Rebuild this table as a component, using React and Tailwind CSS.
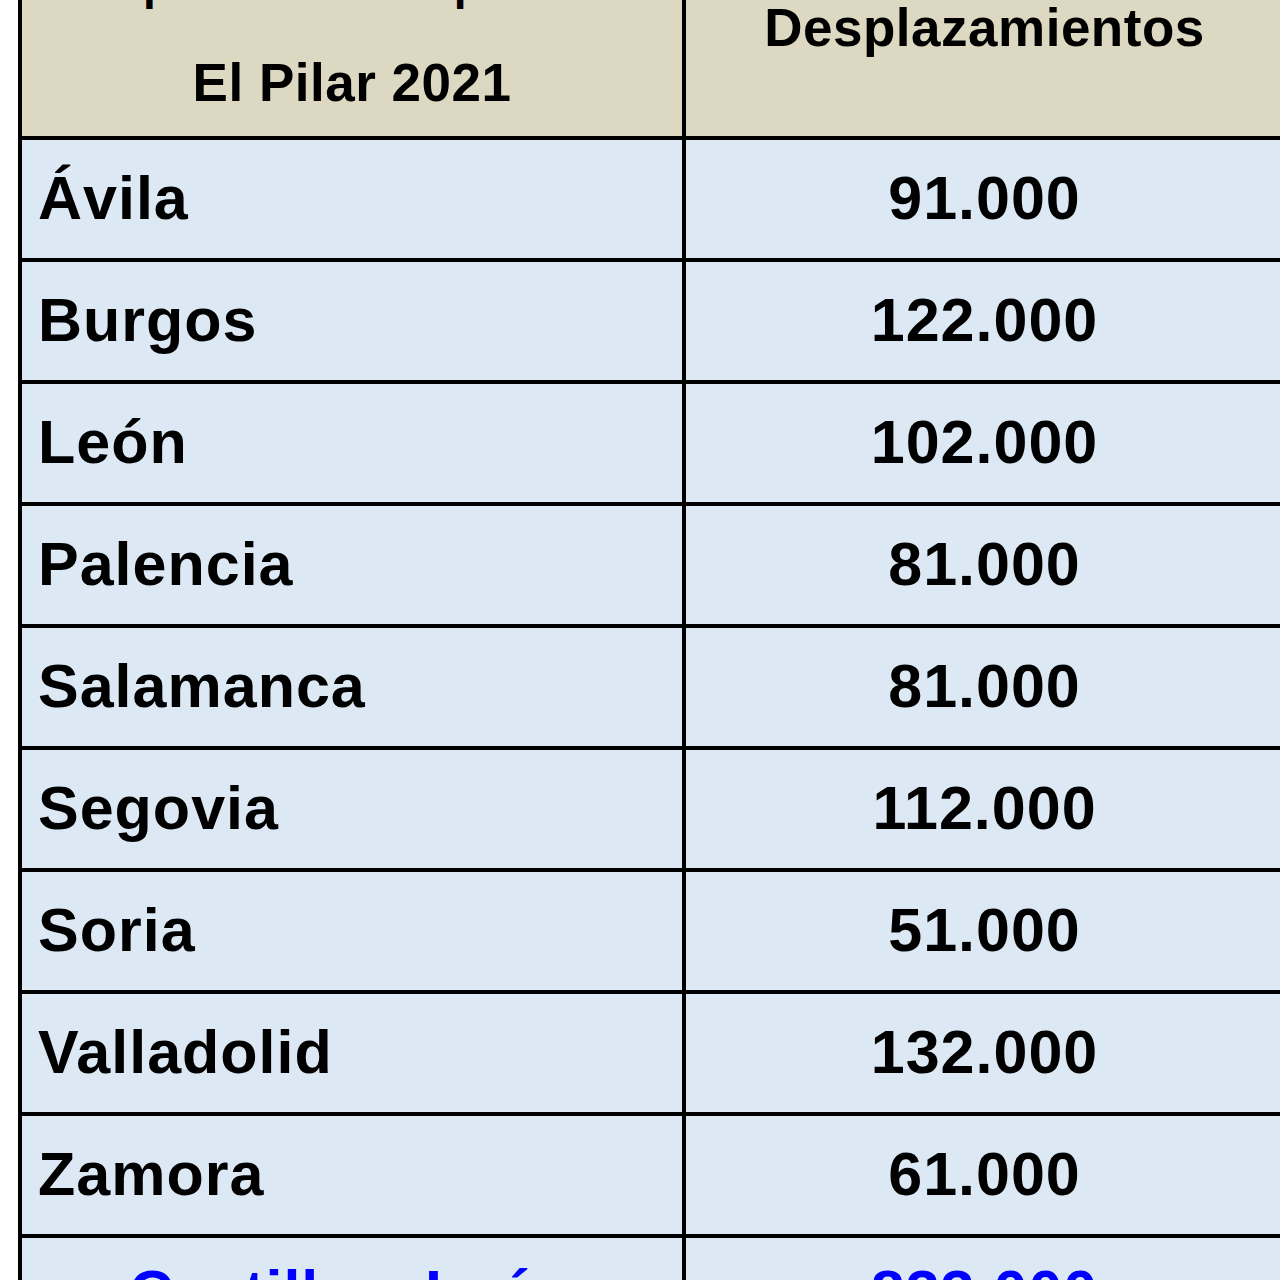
import React from "react";

const rows = [
  ["Ávila", "91.000"],
  ["Burgos", "122.000"],
  ["León", "102.000"],
  ["Palencia", "81.000"],
  ["Salamanca", "81.000"],
  ["Segovia", "112.000"],
  ["Soria", "51.000"],
  ["Valladolid", "132.000"],
  ["Zamora", "61.000"],
];

export default function App() {
  return (
    <div
      className="w-[1280px] h-[1280px] overflow-hidden bg-white"
      style={{ fontFamily: '"Liberation Sans", Arial, sans-serif' }}
    >
      <div className="ml-[18px] mt-[-67px] w-[1269px] bg-black p-[4px] grid grid-cols-[660px_597px] gap-[4px] font-bold text-black">
        {/* Header */}
        <div className="h-[199px] bg-[#ddd8c2] flex flex-col items-center tracking-[0.5px]">
          <div className="pt-[20px] pl-[16px] text-[46px] leading-[52px] whitespace-nowrap">
            Desplazamientos previstos
          </div>
          <div className="mt-[44px] text-[53px] leading-[60px] whitespace-nowrap">
            El Pilar 2021
          </div>
        </div>
        <div className="h-[199px] bg-[#ddd8c2] flex flex-col items-center tracking-[0.5px]">
          <div className="pt-[1px] text-[53px] leading-[60px] whitespace-nowrap">
            Número de
          </div>
          <div className="text-[53px] leading-[60px] whitespace-nowrap">
            Desplazamientos
          </div>
        </div>

        {rows.map(([name, value]) => (
          <React.Fragment key={name}>
            <div className="h-[118px] bg-[#dce9f5] flex items-center pl-[16px] text-[61px] tracking-[1px] whitespace-nowrap">
              {name}
            </div>
            <div className="h-[118px] bg-[#dce9f5] flex items-center justify-center text-[61px] tracking-[1px] whitespace-nowrap">
              {value}
            </div>
          </React.Fragment>
        ))}

        <div className="h-[118px] bg-[#dce9f5] flex items-center justify-center pb-[8px] text-[61px] tracking-[1px] text-[#0000ff] whitespace-nowrap">
          Castilla y León
        </div>
        <div className="h-[118px] bg-[#dce9f5] flex items-center justify-center pb-[8px] text-[61px] tracking-[1px] text-[#0000ff] whitespace-nowrap">
          833.000
        </div>
      </div>
    </div>
  );
}
